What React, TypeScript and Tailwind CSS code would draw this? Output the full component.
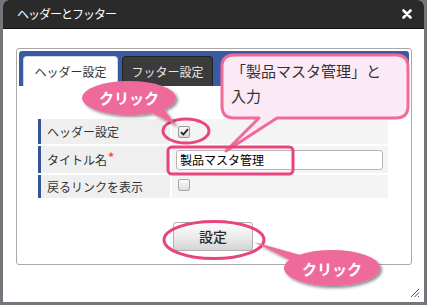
import React from 'react';

const jp = { fontFamily: '"Noto Sans CJK JP", "Noto Sans", sans-serif' };

const Row: React.FC<{ label: string; required?: boolean; h: string; children?: React.ReactNode }> = ({ label, required, h, children }) => (
  <div className={`flex gap-[2px] ${h}`}>
    <div className="w-[132px] shrink-0 bg-[#efefef] border-l-[3px] border-[#34549a] flex items-center pl-[6px] text-[12px] text-[#333]">
      {label}
      {required && <span className="text-[#e8553a] ml-[1px] -mt-[5px] text-[12px] font-bold">*</span>}
    </div>
    <div className="flex-1 bg-[#f4f4f4] flex items-center pl-[4px]">{children}</div>
  </div>
);

export default function App() {
  return (
    <div className="relative w-[427px] h-[305px] bg-[#75757b] px-[3px] pb-[3px] overflow-hidden" style={jp}>
      <div className="flex flex-col h-full rounded-t-[6px] overflow-hidden bg-white">
        {/* title bar */}
        <div className="h-[29px] shrink-0 bg-[#2a2a2a] border-b border-[#111] flex items-center justify-between pl-[14px] pr-[12px]">
          <span className="text-white text-[12px] tracking-[-1px]">ヘッダーとフッター</span>
          <svg width="10" height="10" viewBox="0 0 10 10">
            <path d="M1.5 1.5 L8.5 8.5 M8.5 1.5 L1.5 8.5" stroke="#fff" strokeWidth="2.6" strokeLinecap="round" />
          </svg>
        </div>

        {/* body */}
        <div className="relative flex-1 pl-[13px] pr-[12px] pt-[19px] pb-[37px]">
          <div className="h-full border border-[#a9a9a9] rounded-[3px] p-[2px] flex flex-col">
            {/* tabs */}
            <div className="h-[35px] shrink-0 bg-[#3a5ba2] rounded-t-[3px] flex items-end gap-[4px] pl-[4px]">
              <div className="w-[95px] h-[30px] bg-white rounded-t-[4px] border border-b-0 border-[#cfd6e4] flex items-center justify-center text-[12px] text-[#333]">
                ヘッダー設定
              </div>
              <div className="w-[91px] h-[30px] bg-[#3b3b3b] rounded-t-[4px] border border-b-0 border-[#222] flex items-center justify-center text-[12px] text-[#ece4e0]">
                フッター設定
              </div>
            </div>

            {/* form */}
            <div className="flex-1 flex flex-col pl-[19px] pr-[21px] pt-[33px]">
              <div className="flex flex-col gap-[2px]">
                <Row label="ヘッダー設定" h="h-[25px]">
                  <div className="ml-[2px] w-[12px] h-[12px] rounded-[2px] border border-[#9a9a9a] bg-gradient-to-b from-[#fafafa] to-[#d8d8d8] flex items-center justify-center">
                    <svg width="9" height="8" viewBox="0 0 9 8">
                      <path d="M1 4.2 L3.4 6.5 L8 1.2" stroke="#222" strokeWidth="1.8" fill="none" />
                    </svg>
                  </div>
                </Row>
                <Row label="タイトル名" required h="h-[27px]">
                  <div className="w-[207px] h-[20px] bg-white border border-[#b5b5b5] rounded-[3px] flex items-center pl-[3px] text-[12px] text-black">
                    製品マスタ管理
                  </div>
                </Row>
                <Row label="戻るリンクを表示" h="h-[23px]">
                  <div className="ml-[2px] -mt-[4px] w-[12px] h-[12px] rounded-[2px] border border-[#a5a5a5] bg-gradient-to-b from-[#fafafa] to-[#dcdcdc]" />
                </Row>
              </div>
              <div className="flex-1 flex justify-center items-start pt-[24px]">
                <div className="w-[80px] h-[29px] rounded-[3px] border border-[#b0b0b0] bg-gradient-to-b from-[#fdfdfd] via-[#ececec] to-[#d4d4d4] flex items-center justify-center text-[14px] font-medium text-[#2a2a2a]">
                  設定
                </div>
              </div>
            </div>
          </div>

          {/* resize grip */}
          <svg className="absolute right-[4px] bottom-[4px]" width="10" height="10" viewBox="0 0 10 10">
            <path d="M9 1 L1 9 M9 4.5 L4.5 9 M9 8 L8 9" stroke="#555" strokeWidth="1" />
          </svg>
        </div>
      </div>

      {/* annotations */}
      <svg className="absolute left-0 top-0 pointer-events-none" width="427" height="305" viewBox="0 0 427 305">
        <defs>
          <filter id="sh" x="-20%" y="-30%" width="150%" height="170%">
            <feDropShadow dx="2" dy="2" stdDeviation="1.6" floodColor="#000" floodOpacity="0.45" />
          </filter>
        </defs>
        {/* speech bubble */}
        <path
          d="M234 55 H396 Q408 55 408 67 V106 Q408 118 396 118 H277 L226 151 L259 118 H234 Q222 118 222 106 V67 Q222 55 234 55 Z"
          fill="#fbeaf6"
          stroke="#ee6b9a"
          strokeWidth="3"
          strokeLinejoin="round"
        />
        {/* checkbox circle */}
        <ellipse cx="186" cy="131" rx="23" ry="12" fill="none" stroke="#e8457f" strokeWidth="3" />
        {/* input frame */}
        <rect x="168" y="147" width="125" height="27" rx="4" fill="none" stroke="#e8457f" strokeWidth="3" />
        {/* button ellipse */}
        <ellipse cx="214" cy="240" rx="50" ry="18.5" fill="none" stroke="#e8457f" strokeWidth="3" />
        {/* top click bubble */}
        <g filter="url(#sh)">
          <path d="M146 110 L160 104 L176 125 Z" fill="#ee6b9a" />
          <ellipse cx="129" cy="98" rx="47" ry="17" fill="#ee6b9a" />
        </g>
        {/* bottom click bubble */}
        <g filter="url(#sh)">
          <path d="M254 242 L304 256 L300 265 Z" fill="#ee6b9a" />
          <ellipse cx="332" cy="268" rx="48" ry="18" fill="#ee6b9a" />
        </g>
      </svg>

      <div className="absolute left-[222px] top-[58px] w-[186px] pl-[9px] text-[15px] leading-[25px] text-[#333]">
        <div>「製品マスタ管理」と</div>
        <div>入力</div>
      </div>
      <div className="absolute left-[82px] top-[86px] w-[94px] h-[24px] flex items-center justify-center text-white text-[15px] font-bold">
        クリック
      </div>
      <div className="absolute left-[284px] top-[257px] w-[96px] h-[24px] flex items-center justify-center text-white text-[15px] font-bold">
        クリック
      </div>
    </div>
  );
}
